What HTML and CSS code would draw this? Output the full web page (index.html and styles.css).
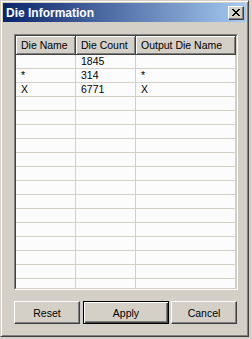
FILE: index.html
```html
<!DOCTYPE html>
<html lang="en">
<head>
    <meta charset="UTF-8">
    <title>Die Information</title>
    <link rel="stylesheet" href="styles.css">
</head>
<body>
    <!-- Dialog Window -->
    <div class="window">
        <div class="titlebar">
            <span class="title">Die Information</span>
            <button class="close-btn" aria-label="Close">
                <svg width="8" height="7" viewBox="0 0 8 7" shape-rendering="crispEdges">
                    <path d="M0 0h2v1h-2z M6 0h2v1h-2z M1 1h2v1h-2z M5 1h2v1h-2z M2 2h4v1h-4z M3 3h2v1h-2z M2 4h4v1h-4z M1 5h2v1h-2z M5 5h2v1h-2z M0 6h2v1h-2z M6 6h2v1h-2z" fill="#000"/>
                </svg>
            </button>
        </div>

        <div class="content">
            <!-- Die List -->
            <div class="grid-outer">
                <div class="grid">
                    <div class="row header">
                        <div class="cell c1">Die Name</div>
                        <div class="cell c2">Die Count</div>
                        <div class="cell c3">Output Die Name</div>
                    </div>
                    <div class="row"><div class="cell c1"></div><div class="cell c2">1845</div><div class="cell c3"></div></div>
                    <div class="row"><div class="cell c1">*</div><div class="cell c2">314</div><div class="cell c3">*</div></div>
                    <div class="row"><div class="cell c1">X</div><div class="cell c2">6771</div><div class="cell c3">X</div></div>
                    <div class="row"><div class="cell c1"></div><div class="cell c2"></div><div class="cell c3"></div></div>
                    <div class="row"><div class="cell c1"></div><div class="cell c2"></div><div class="cell c3"></div></div>
                    <div class="row"><div class="cell c1"></div><div class="cell c2"></div><div class="cell c3"></div></div>
                    <div class="row"><div class="cell c1"></div><div class="cell c2"></div><div class="cell c3"></div></div>
                    <div class="row"><div class="cell c1"></div><div class="cell c2"></div><div class="cell c3"></div></div>
                    <div class="row"><div class="cell c1"></div><div class="cell c2"></div><div class="cell c3"></div></div>
                    <div class="row"><div class="cell c1"></div><div class="cell c2"></div><div class="cell c3"></div></div>
                    <div class="row"><div class="cell c1"></div><div class="cell c2"></div><div class="cell c3"></div></div>
                    <div class="row"><div class="cell c1"></div><div class="cell c2"></div><div class="cell c3"></div></div>
                    <div class="row"><div class="cell c1"></div><div class="cell c2"></div><div class="cell c3"></div></div>
                    <div class="row"><div class="cell c1"></div><div class="cell c2"></div><div class="cell c3"></div></div>
                    <div class="row"><div class="cell c1"></div><div class="cell c2"></div><div class="cell c3"></div></div>
                    <div class="row"><div class="cell c1"></div><div class="cell c2"></div><div class="cell c3"></div></div>
                    <div class="row"><div class="cell c1"></div><div class="cell c2"></div><div class="cell c3"></div></div>
                </div>
            </div>

            <!-- Buttons -->
            <div class="buttons">
                <button class="btn btn-reset">Reset</button>
                <button class="btn btn-apply">Apply</button>
                <button class="btn btn-cancel">Cancel</button>
            </div>
        </div>
    </div>
</body>
</html>
```

FILE: styles.css
```css
body {
    margin: 0;
    padding: 0;
    background-color: #d4d0c8;
    font-family: "Liberation Sans", Arial, sans-serif;
    font-size: 10.5px;
    color: #000;
}

/* Window frame */
.window {
    width: 249px;
    height: 337px;
    box-sizing: border-box;
    border: 1px solid;
    border-color: #d4d0c8 #404040 #404040 #d4d0c8;
    box-shadow: inset 1px 1px #fff, inset -1px -1px #808080;
    padding: 2px;
    display: flex;
    flex-direction: column;
}

/* Title bar */
.titlebar {
    height: 19px;
    flex-shrink: 0;
    display: flex;
    align-items: center;
    justify-content: space-between;
    background: linear-gradient(to right, #0a246a, #a6caf0);
    padding-left: 3px;
}

.title {
    color: #fff;
    font-weight: bold;
    font-size: 12px;
}

.close-btn {
    width: 16px;
    height: 14px;
    margin-right: 2px;
    padding: 0;
    box-sizing: border-box;
    background-color: #d4d0c8;
    border: 1px solid;
    border-color: #fff #404040 #404040 #fff;
    box-shadow: inset -1px -1px #808080;
    display: flex;
    align-items: center;
    justify-content: center;
}

.close-btn svg {
    display: block;
}

/* Content */
.content {
    padding: 12px 8px 0 11px;
}

.grid-outer {
    width: 224px;
    height: 256px;
    box-sizing: border-box;
    border: 1px solid;
    border-color: #808080 #fff #fff #808080;
}

.grid {
    height: 100%;
    box-sizing: border-box;
    border: 1px solid;
    border-color: #404040 #d4d0c8 #d4d0c8 #404040;
    background-color: #fcfcfc;
    overflow: hidden;
}

.row {
    display: flex;
    height: 14px;
}

.cell {
    box-sizing: border-box;
    border-right: 1px solid #d4d0c8;
    border-bottom: 1px solid #d4d0c8;
    padding-left: 5px;
    line-height: 13px;
    white-space: nowrap;
    overflow: hidden;
}

.c1 { width: 60px; }
.c2 { width: 60px; }
.c3 { width: 100px; }

.header {
    height: 19px;
}

.header .cell {
    background-color: #d4d0c8;
    border-right: 1px solid #404040;
    border-bottom: 1px solid #404040;
    box-shadow: inset 1px 1px #fff, inset -1px -1px #808080;
    line-height: 18px;
}

/* Buttons */
.buttons {
    display: flex;
    margin-top: 11px;
}

.btn {
    height: 23px;
    box-sizing: border-box;
    padding: 0;
    font-family: "Liberation Sans", Arial, sans-serif;
    font-size: 10.5px;
    color: #000;
    background-color: #d4d0c8;
    border: 1px solid;
    border-color: #fff #404040 #404040 #fff;
    box-shadow: inset -1px -1px #808080;
}

.btn-reset { width: 66px; }

.btn-apply {
    width: 86px;
    margin-left: 3px;
    border: 1px solid #000;
    box-shadow: inset 1px 1px #fff, inset -1px -1px #404040, inset -2px -2px #808080;
}

.btn-cancel {
    width: 66px;
    margin-left: 2px;
}
```
